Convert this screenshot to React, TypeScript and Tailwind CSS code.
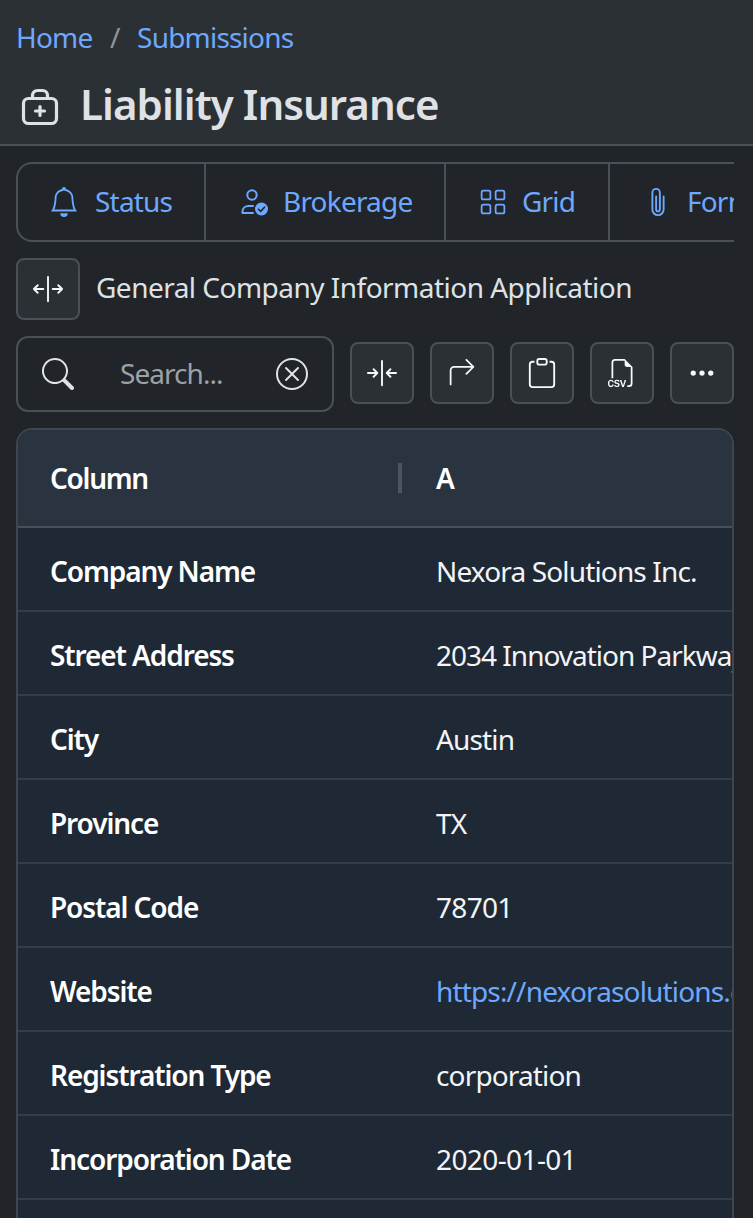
import React from "react";
import { BsBell, BsGrid, BsPaperclip, BsClipboard, BsFiletypeCsv, BsThreeDots, BsSearch, BsXCircle, BsArrow90DegRight, BsArrowsCollapseVertical, BsArrowsExpandVertical } from "react-icons/bs";

function MedBag() {
  return (
    <svg width="38" height="38" viewBox="0 0 38 38" fill="none" stroke="currentColor" strokeWidth="3.2" strokeLinecap="round" strokeLinejoin="round">
      <rect x="2.5" y="10.5" width="33" height="25" rx="5" />
      <path d="M11.500 10V7.500a5 5 0 0 1 5-5h5a5 5 0 0 1 5 5V10" />
      <path d="M19 18.500v9M14.500 23h9" />
    </svg>
  );
}

function UserCheck() {
  return (
    <svg width="28" height="28" viewBox="0 0 28 28" fill="none">
      <circle cx="11" cy="7" r="4.700" stroke="currentColor" strokeWidth="2" />
      <path d="M1.500 25v-1.500c0-3.500 3-5.500 6-5.500h4.500M1.500 25H12" stroke="currentColor" strokeWidth="2" strokeLinecap="round" />
      <circle cx="20.500" cy="21" r="6.500" fill="currentColor" />
      <path d="M17.500 21.200l2.200 2.200 3.800-4.200" stroke="#212529" strokeWidth="1.600" strokeLinecap="round" strokeLinejoin="round" />
    </svg>
  );
}

function Tab({ icon, label, className }: { icon: React.ReactNode; label: string; className: string }) {
  return (
    <div className={`flex h-full shrink-0 items-center border-r-2 border-[#495057] text-[#6ea8fe] ${className}`}>
      {icon}
      <span className="mb-[2px] text-[28px] tracking-[-0.8px]">{label}</span>
    </div>
  );
}

function IconButton({ children }: { children: React.ReactNode }) {
  return (
    <button className="mb-[2px] flex h-[62px] w-[64px] shrink-0 items-center justify-center rounded-[8px] border-2 border-[#495057] bg-[#2b3035] text-[#f8f9fa]">
      {children}
    </button>
  );
}

const rows: [string, string, string][] = [
  ["Company Name", "Nexora Solutions Inc.", "text-[#f3f4f6] tracking-[-0.85px]"],
  ["Street Address", "2034 Innovation Parkway", "text-[#f3f4f6] tracking-[-1px]"],
  ["City", "Austin", "text-[#f3f4f6] tracking-[-0.85px]"],
  ["Province", "TX", "text-[#f3f4f6] tracking-[-0.85px]"],
  ["Postal Code", "78701", "text-[#f3f4f6] tracking-[-0.7px]"],
  ["Website", "https://nexorasolutions.com", "text-[#6ea8fe] tracking-[-0.85px]"],
  ["Registration Type", "corporation", "text-[#f3f4f6] tracking-[-0.85px]"],
  ["Incorporation Date", "2020-01-01", "text-[#f3f4f6] tracking-[-0.6px]"],
  ["", "", ""],
];

export default function App() {
  return (
    <div className="h-[1218px] w-[753px] overflow-hidden bg-[#212529] font-['Noto_Sans',sans-serif]">
      <header className="h-[146px] border-b-2 border-[#495057] bg-[#2b3035] px-4">
        <nav className="flex h-[74px] items-center text-[28px] tracking-[-0.8px] text-[#6ea8fe]">
          <span>Home</span>
          <span className="mx-[17.500px] text-[#8f959b]">/</span>
          <span>Submissions</span>
        </nav>
        <div className="flex h-[56px] items-center gap-[21px] pl-[5px] text-[#dee2e6]">
          <div className="mt-[10px]"><MedBag /></div>
          <h1 className="mt-[2px] text-[42px] font-semibold tracking-[-0.95px]">Liability Insurance</h1>
        </div>
      </header>
      <main className="px-4">
        <div className="mt-4 mr-[3px] flex h-[80px] overflow-hidden rounded-l-[16px] border-y-2 border-l-2 border-[#495057]">
          <Tab className="w-[188px] gap-[16px] pl-[31px]" icon={<BsBell size={30} />} label="Status" />
          <Tab className="w-[240px] gap-[14px] pl-[35px]" icon={<UserCheck />} label="Brokerage" />
          <Tab className="w-[164px] gap-[15px] pl-[33px]" icon={<BsGrid size={28} />} label="Grid" />
          <Tab className="w-[200px] gap-[14px] pl-[33px]" icon={<BsPaperclip size={30} />} label="Forms" />
        </div>
        <div className="mt-4 flex items-center gap-4">
          <button className="flex h-[62px] w-[64px] items-center justify-center rounded-[8px] border-2 border-[#495057] bg-[#2b3035] text-[#f8f9fa]">
            <BsArrowsExpandVertical size={30} />
          </button>
          <span className="mb-[4px] text-[28px] tracking-[-0.52px] text-[#dee2e6]">General Company Information Application</span>
        </div>
        <div className="mt-4 flex items-center gap-4">
          <div className="flex h-[76px] w-[318px] shrink-0 items-center rounded-[12px] border-2 border-[#495057] px-[24px] text-[#dee2e6]">
            <BsSearch size={32} />
            <span className="mb-[2px] ml-[46px] flex-1 text-[28px] tracking-[-0.95px] text-[#9ca1a6]">Search...</span>
            <BsXCircle size={32} />
          </div>
          <IconButton><BsArrowsCollapseVertical size={30} /></IconButton>
          <IconButton><BsArrow90DegRight size={28} /></IconButton>
          <IconButton><BsClipboard size={30} /></IconButton>
          <IconButton><BsFiletypeCsv size={28} /></IconButton>
          <IconButton><BsThreeDots size={28} /></IconButton>
        </div>
        <div className="mt-4 mr-[3px] overflow-hidden rounded-t-[16px] border-x-2 border-t-2 border-[#3d4651]">
          <div className="flex h-[98px] items-center border-b-2 border-[#495057] bg-[#2a3441] text-[28px] font-semibold text-white">
            <div className="relative flex h-full w-[386px] items-center pl-[32px] tracking-[-1.3px]">
              Column
              <span className="absolute right-[2px] top-[33px] h-[30px] w-[4px] bg-[#4b5563]" />
            </div>
            <div className="pl-[32px]">A</div>
          </div>
          {rows.map(([label, value, tone]) => (
            <div key={label} className="flex h-[84px] items-center border-b-2 border-[#343c47] bg-[#1e2935] pt-[4px] text-[28px]">
              <div className="w-[386px] pl-[32px] font-semibold tracking-[-1.1px] text-white">{label}</div>
              <div className={`min-w-0 flex-1 overflow-hidden whitespace-nowrap pl-[32px] ${tone}`}>{value}</div>
            </div>
          ))}
        </div>
      </main>
    </div>
  );
}
